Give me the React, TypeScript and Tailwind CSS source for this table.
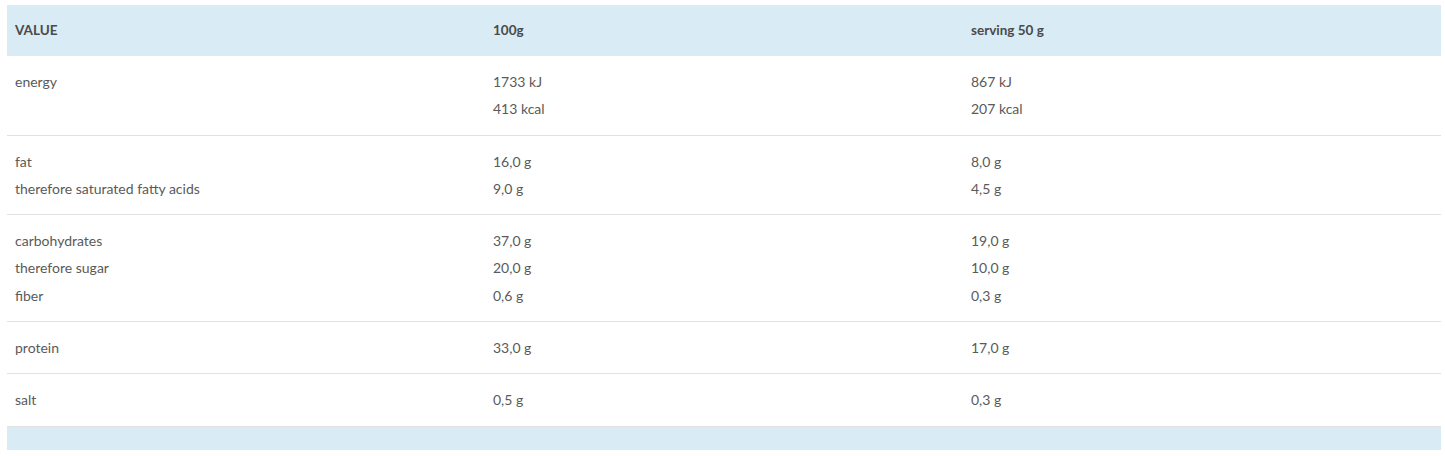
export default function App() {
  const groups: string[][][] = [
    [["energy", "1733 kJ", "867 kJ"], ["", "413 kcal", "207 kcal"]],
    [["fat", "16,0 g", "8,0 g"], ["therefore saturated fatty acids", "9,0 g", "4,5 g"]],
    [
      ["carbohydrates", "37,0 g", "19,0 g"],
      ["therefore sugar", "20,0 g", "10,0 g"],
      ["fiber", "0,6 g", "0,3 g"],
    ],
    [["protein", "33,0 g", "17,0 g"]],
    [["salt", "0,5 g", "0,3 g"]],
  ];
  return (
    <div className="bg-white min-h-[456px] pt-[5px] pl-[7px] font-['Lato',sans-serif] text-[14px] text-[#5a5a5a]">
      <div className="w-[1434px]">
        <div className="grid grid-cols-3 bg-[#d9ebf5] h-[51px] items-center font-bold text-[13.5px] text-[#4a4a4a]">
          <div className="px-2">VALUE</div>
          <div className="px-2">100g</div>
          <div className="px-2">serving 50 g</div>
        </div>
        {groups.map((g, i) => (
          <div
            key={i}
            className={`grid grid-cols-3 py-3 leading-[27.3px] ${i > 0 ? "border-t border-[#e2e2e2]" : ""}`}
          >
            {[0, 1, 2].map((c) => (
              <div key={c} className="px-2">
                {g.map((r, j) => (
                  <div key={j} className="h-[27.3px]">
                    {r[c]}
                  </div>
                ))}
              </div>
            ))}
          </div>
        ))}
        <div className="h-[24px] bg-[#d9ebf5] border-t border-[#e2e2e2]" />
      </div>
    </div>
  );
}
